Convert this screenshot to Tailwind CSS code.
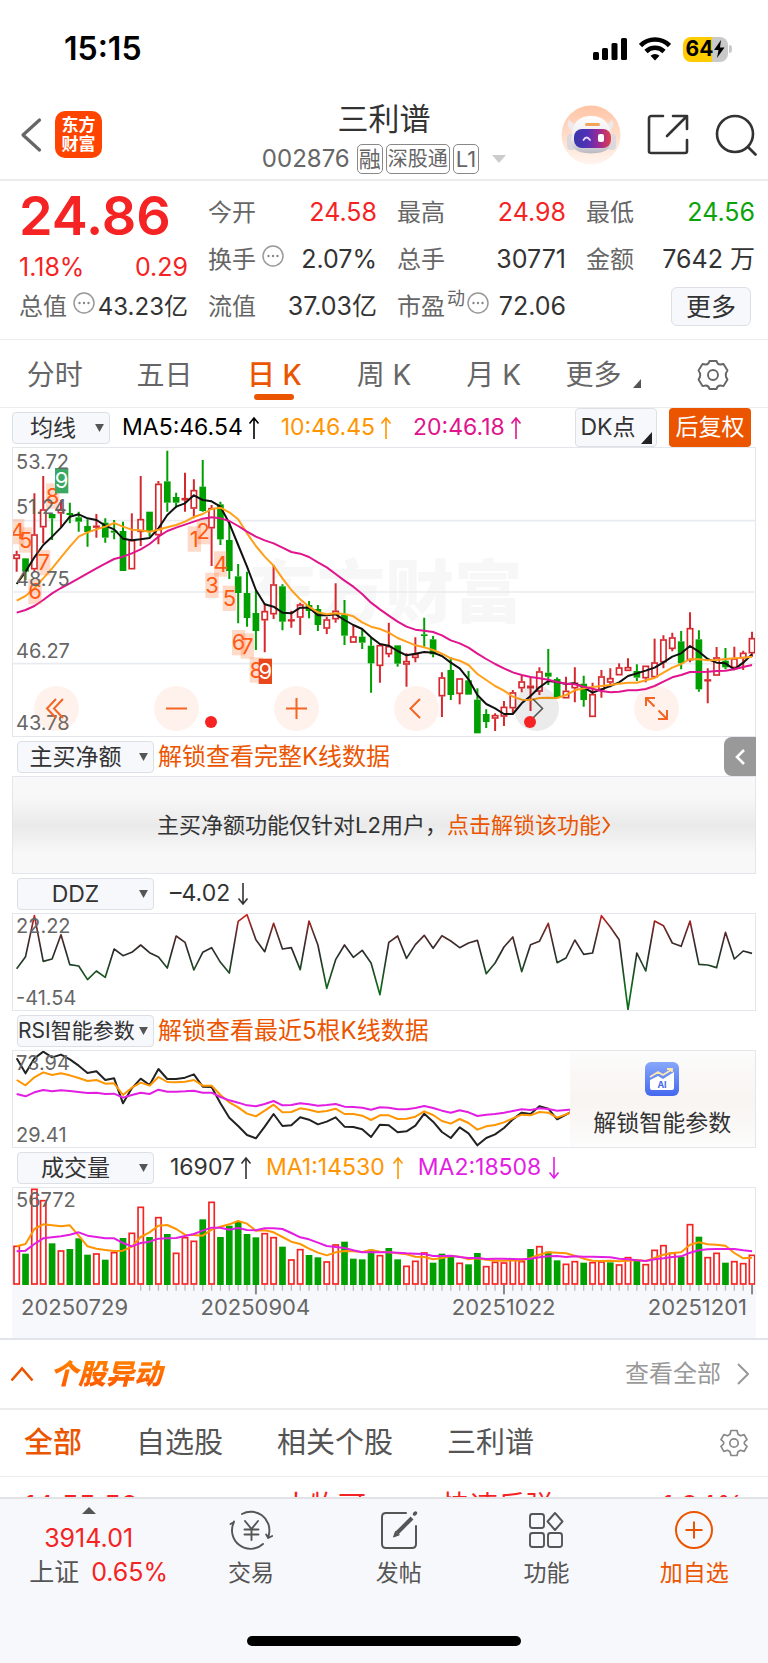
<!DOCTYPE html>
<html lang="zh-CN">

<head>
    <meta charset="UTF-8">
    <meta name="viewport" content="width=device-width, initial-scale=1.0">
    <title>三利谱 002876</title>
    <script src="https://cdn.jsdelivr.net/npm/@tailwindcss/browser@4"></script>
</head>

<body class="h-screen flex flex-col overflow-hidden bg-white text-[#333] font-['Inter','Noto_Sans_CJK_SC',sans-serif]">

    <!-- Shared icons -->
    <svg class="hidden">
        <symbol id="up" viewBox="0 0 12 24"><path d="M6 23V2M1.5 7.500 6 2l4.500 5.500" fill="none" stroke="currentColor" stroke-width="1.600" /></symbol>
        <symbol id="down" viewBox="0 0 12 24"><path d="M6 1v21M1.500 16.500 6 22l4.500-5.500" fill="none" stroke="currentColor" stroke-width="1.600" /></symbol>
        <symbol id="caret" viewBox="0 0 10 9"><path d="M0 0h10L5 9z" fill="#555" /></symbol>
        <symbol id="dots" viewBox="0 0 22 22">
            <circle cx="11" cy="11" r="10" fill="none" stroke="#999" stroke-width="1.500" />
            <circle cx="6.500" cy="11" r="1.200" fill="#888" /><circle cx="11" cy="11" r="1.200" fill="#888" /><circle cx="15.500" cy="11" r="1.200" fill="#888" />
        </symbol>
    </svg>

    <main class="flex-1 min-h-0 overflow-hidden">
        <!-- Status bar -->
        <div class="h-[98px] flex items-center justify-between pl-16 pr-9 text-black">
            <span class="text-[32px] font-semibold">15:15</span>
            <div class="flex items-center gap-3">
                <svg class="w-[34px] h-6" viewBox="0 0 34 24">
                    <rect x="0" y="15" width="6" height="8" rx="1.500" /><rect x="9" y="11" width="6" height="12" rx="1.500" />
                    <rect x="18.500" y="6" width="6" height="17" rx="1.500" /><rect x="28" y="1" width="6" height="22" rx="1.500" />
                </svg>
                <svg class="w-8 h-6" viewBox="0 0 32 24" fill="none" stroke="#000" stroke-width="4.600">
                    <path d="M1.500 8.500a20.500 20.500 0 0 1 29 0" /><path d="M7 14.500a12.800 12.800 0 0 1 18 0" />
                    <path d="M16 23.500l-4.500-4.800a6.500 6.500 0 0 1 9 0z" fill="#000" stroke="none" />
                </svg>
                <div class="flex items-center gap-px">
                    <div class="flex items-center justify-center w-[45px] h-[25px] rounded-lg bg-linear-to-r from-[#ffcc00] from-65% to-[#c9c9c9] to-65% text-[21px] font-bold">
                        64<svg class="w-3 h-[18px]" viewBox="0 0 12 18"><path d="M8 0 1 10h4.500L4 18l7.500-10.500H7z" /></svg>
                    </div>
                    <div class="w-[3px] h-2 rounded-r-full bg-[#c9c9c9]"></div>
                </div>
            </div>
        </div>

        <!-- Header -->
        <header class="h-[83px] grid grid-cols-[1fr_auto_1fr] items-center border-b-2 border-[#ececee]">
            <div class="flex items-center gap-3 pl-5 pb-2">
                <button aria-label="返回">
                    <svg class="w-[23px] h-9" viewBox="0 0 23 36"><path d="M19.500 3 3 18l16.500 15" fill="none" stroke="#666" stroke-width="3.200" stroke-linecap="round" stroke-linejoin="round" /></svg>
                </button>
                <div class="w-[47px] h-[47px] flex items-center justify-center rounded-[10px] bg-[#ff4400] text-white text-[17px] leading-[19px] font-bold text-center">东方<br>财富</div>
            </div>
            <div class="flex flex-col items-center">
                <h1 class="text-[31px] leading-10">三利谱</h1>
                <div class="flex items-center gap-[3px] h-10 text-[24px] text-[#666]">
                    <span class="pr-1">002876</span>
                    <span class="h-[30px] px-px flex items-center border border-[#888] rounded-[5px] text-[22px] leading-7">融</span>
                    <span class="h-[30px] px-px flex items-center border border-[#888] rounded-[5px] text-[20px] leading-7">深股通</span>
                    <span class="h-[30px] px-0.5 flex items-center border border-[#888] rounded-[5px] text-[22px] leading-7">L1</span>
                    <svg class="w-3.5 h-2 ml-2.5" viewBox="0 0 14 8"><path d="M0 0h14L7 8z" fill="#ccc" /></svg>
                </div>
            </div>
            <div class="flex items-center justify-end gap-[26px] pr-[11px] pb-2">
                <svg class="w-[60px] h-[60px]" viewBox="0 0 60 60">
                    <defs>
                        <linearGradient id="halo" x2="0" y2="1"><stop offset="0" stop-color="#ffc4a4" /><stop offset="1" stop-color="#fff5ef" /></linearGradient>
                        <linearGradient id="head" x2="0" y2="1"><stop offset="0" stop-color="#fff" /><stop offset=".6" stop-color="#ece9ec" /><stop offset="1" stop-color="#b9b8c2" /></linearGradient>
                        <linearGradient id="visor"><stop offset="0" stop-color="#3a35a8" /><stop offset=".35" stop-color="#5030b8" /><stop offset=".7" stop-color="#a02a90" /><stop offset="1" stop-color="#e0404a" /></linearGradient>
                    </defs>
                    <circle cx="30" cy="30" r="29.500" fill="url(#halo)" />
                    <path d="M8 14q-4 8 4 13l7-8q-9 1-11-5zM51 14q4 8-4 13l-7-8q9 1 11-5z" fill="#eeeaec" />
                    <rect x="6" y="29" width="9" height="16" rx="4" fill="#dcd8de" /><rect x="46" y="29" width="9" height="16" rx="4" fill="#dcd8de" />
                    <path d="M11 30q1-19 19-19t20 19q5 18-20 18.500Q6 48 11 30z" fill="url(#head)" />
                    <rect x="13" y="24" width="37" height="19" rx="8" fill="url(#visor)" />
                    <path d="M22.500 35q3-5 6.500 0" fill="none" stroke="#e8dcff" stroke-width="1.800" stroke-linecap="round" />
                    <rect x="37" y="29" width="6" height="8" rx="2" fill="#fff" />
                    <rect x="24" y="18" width="15" height="3" rx="1.500" fill="#f0a45c" />
                </svg>
                <button aria-label="分享">
                    <svg class="w-[42px] h-[42px]" viewBox="0 0 42 42" fill="none" stroke="#333" stroke-width="2.600" stroke-linecap="round" stroke-linejoin="round">
                        <path d="M16 2H4.500Q2 2 2 4.500v33Q2 39 4.500 39H38q2 0 2-2V26M26 2h14v13M39 3 20 22" />
                    </svg>
                </button>
                <button aria-label="搜索">
                    <svg class="w-[42px] h-[42px]" viewBox="0 0 42 42" fill="none" stroke="#333" stroke-width="2.600" stroke-linecap="round">
                        <circle cx="20" cy="20" r="18" /><path d="m33 33 7.500 7.500" />
                    </svg>
                </button>
            </div>
        </header>

        <!-- Quote -->
        <section class="grid grid-cols-4 gap-5 pl-[19px] pr-[13px] pt-2 pb-[9px] border-b border-[#ededf0] text-[25px]">
            <div>
                <div class="h-[52px] flex items-center text-[54px] font-semibold text-[#f52323]">24.86</div>
                <div class="h-[42px] flex items-end justify-between leading-8 text-[#f52323]"><span>1.18%</span><span>0.29</span></div>
                <div class="h-[47px] flex items-center justify-between whitespace-nowrap text-[24px]">
                    <span class="text-[#666]">总值</span><svg class="w-[22px] h-[22px] mb-2 ml-1 shrink-0"><use href="#dots" /></svg><span>43.23亿</span>
                </div>
            </div>
            <div>
                <div class="h-[47px] flex items-center justify-between"><span class="text-[24px] text-[#666]">今开</span><span class="text-[#f52323]">24.58</span></div>
                <div class="h-[47px] flex items-center">
                    <span class="text-[24px] text-[#666]">换手</span><svg class="w-[22px] h-[22px] mb-2 ml-1.5"><use href="#dots" /></svg><span class="ml-auto">2.07%</span>
                </div>
                <div class="h-[47px] flex items-center justify-between"><span class="text-[24px] text-[#666]">流值</span><span>37.03亿</span></div>
            </div>
            <div>
                <div class="h-[47px] flex items-center justify-between"><span class="text-[24px] text-[#666]">最高</span><span class="text-[#f52323]">24.98</span></div>
                <div class="h-[47px] flex items-center justify-between"><span class="text-[24px] text-[#666]">总手</span><span>30771</span></div>
                <div class="h-[47px] flex items-center">
                    <span class="text-[24px] text-[#666]">市盈</span><span class="text-[18px] text-[#666] mb-4 ml-0.5">动</span><svg class="w-[22px] h-[22px] mb-2 ml-0.5"><use href="#dots" /></svg><span class="ml-auto">72.06</span>
                </div>
            </div>
            <div>
                <div class="h-[47px] flex items-center justify-between"><span class="text-[24px] text-[#666]">最低</span><span class="text-[#0aa30a]">24.56</span></div>
                <div class="h-[47px] flex items-center justify-between"><span class="text-[24px] text-[#666]">金额</span><span>7642 万</span></div>
                <div class="h-[47px] flex items-center justify-end pr-1"><button class="w-20 h-[39px] border border-[#dcdfe6] rounded-md bg-[#f7f8fb] text-[25px] leading-9">更多</button></div>
            </div>
        </section>

        <!-- Period tabs -->
        <nav class="h-[68px] pt-0.5 grid grid-cols-7 items-center justify-items-center border-b border-[#ededf0] text-[28px] text-[#666]">
            <button>分时</button>
            <button>五日</button>
            <button class="relative text-[#eb5500] font-medium">日 K<span class="absolute left-1/2 -translate-x-1/2 -bottom-1 w-10 h-1.5 rounded-full bg-[#eb5500]"></span></button>
            <button>周 K</button>
            <button>月 K</button>
            <button class="flex items-end gap-3">更多<svg class="w-2 h-[9px] mb-2" viewBox="0 0 8 9"><path d="M8 0v9H0z" fill="#555" /></svg></button>
            <button aria-label="设置">
                <svg class="w-8 h-8" viewBox="0 0 32 32" fill="none" stroke="#666" stroke-width="1.900" stroke-linejoin="round">
                    <path d="M12.500 2h7q1 4.200 5.200 3.300l1.800-.3 4 6.500q-3.500 4.500 0 9l-4 6.500-1.800-.3q-4.200-.9-5.200 3.300h-7q-1-4.200-5.200-3.300l-1.800.3-4-6.500q3.500-4.500 0-9l4-6.500 1.800.3Q11.500 6.200 12.500 2z" />
                    <circle cx="16" cy="16" r="5" />
                </svg>
            </button>
        </nav>

        <section class="mx-3">
            <!-- MA toolbar -->
            <div class="h-[39px] flex items-center text-[23px]">
                <div class="relative">
                    <select aria-label="指标" class="appearance-none block w-[98px] h-8 pr-4 border border-[#dcdfe6] rounded bg-[#f7f8fb] text-[23px] leading-7 [text-align-last:center]"><option>均线</option></select>
                    <svg class="absolute right-1.5 top-3 w-[9px] h-2 pointer-events-none"><use href="#caret" /></svg>
                </div>
                <div class="flex items-center gap-[5px] ml-3 text-black">MA5:46.54<svg class="w-3 h-6"><use href="#up" /></svg></div>
                <div class="flex items-center gap-[5px] ml-[21px] text-[#ff9500]">10:46.45<svg class="w-3 h-6"><use href="#up" /></svg></div>
                <div class="flex items-center gap-[5px] ml-[21px] text-[#e0148c]">20:46.18<svg class="w-3 h-6"><use href="#up" /></svg></div>
                <button class="relative ml-auto w-[82px] h-[39px] pr-4 border border-[#dcdfe6] rounded bg-[#f7f8fb] whitespace-nowrap">DK点<svg class="absolute right-1 bottom-0.5 w-[11px] h-3" viewBox="0 0 11 12"><path d="M11 0v12H0z" fill="#222" /></svg></button>
                <button class="ml-3 mr-[5px] w-[82px] h-[39px] rounded bg-[#eb5500] text-white">后复权</button>
            </div>

            <!-- Candles -->
            <div class="relative border border-[#e3e6ea]">
                <svg id="kline" class="block w-full" viewBox="0 24 2226 864"></svg>
                <div class="absolute inset-0 grid grid-rows-[26px_45px_72px_72px_72px] items-end pl-[3px] text-[20px] leading-6 text-[#666] pointer-events-none">
                    <span>53.72</span><span>51.24</span><span>48.75</span><span>46.27</span><span>43.78</span>
                </div>
                <div class="absolute left-[21px] bottom-[5px] flex gap-[75px] text-[#f26522]">
                    <button aria-label="最左" class="w-[45px] h-[45px] rounded-full bg-[#ff7a3c]/10"><svg viewBox="0 0 45 45" fill="none" stroke="currentColor" stroke-width="2"><path d="M22 13 13 22.500 22 32M29 13l-9 9.500 9 9.500" /></svg></button>
                    <button aria-label="缩小" class="w-[45px] h-[45px] rounded-full bg-[#ff7a3c]/10"><svg viewBox="0 0 45 45" fill="none" stroke="currentColor" stroke-width="2"><path d="M12 22.500h21" /></svg></button>
                    <button aria-label="放大" class="w-[45px] h-[45px] rounded-full bg-[#ff7a3c]/10"><svg viewBox="0 0 45 45" fill="none" stroke="currentColor" stroke-width="2"><path d="M12 22.500h21M22.500 12v21" /></svg></button>
                    <button aria-label="左移" class="w-[45px] h-[45px] rounded-full bg-[#ff7a3c]/10"><svg viewBox="0 0 45 45" fill="none" stroke="currentColor" stroke-width="2"><path d="M26 13 16.500 22.500 26 32" /></svg></button>
                    <button aria-label="右移" class="w-[45px] h-[45px] rounded-full bg-black/8 text-[#555]"><svg viewBox="0 0 45 45" fill="none" stroke="currentColor" stroke-width="1.600"><path d="m19 13 9.500 9.500L19 32" /></svg></button>
                    <button aria-label="全屏" class="w-[45px] h-[45px] rounded-full bg-[#ff7a3c]/10"><svg viewBox="0 0 45 45" fill="none" stroke="currentColor" stroke-width="2"><path d="M12 20v-8h9M12 12l8.500 8.500M33 24v9h-9M33 33l-8.500-8.500" /></svg></button>
                </div>
                <span class="absolute left-48 bottom-2 w-3 h-3 rounded-full bg-[#f52323]"></span>
                <span class="absolute left-[511px] bottom-2 w-3 h-3 rounded-full bg-[#f52323]"></span>
            </div>

            <!-- Net active buying -->
            <div class="h-[39px] flex items-center text-[24px]">
                <div class="relative ml-[5px]">
                    <select aria-label="指标" class="appearance-none block w-[137px] h-8 pr-5 border border-[#dcdfe6] rounded bg-[#f7f8fb] text-[23px] leading-7 [text-align-last:center]"><option>主买净额</option></select>
                    <svg class="absolute right-1.5 top-3 w-[9px] h-2 pointer-events-none"><use href="#caret" /></svg>
                </div>
                <a href="#" class="ml-1 text-[#eb5500]">解锁查看完整K线数据</a>
                <button aria-label="展开" class="ml-auto w-8 h-[39px] flex items-center justify-center rounded-l-lg bg-[#999]"><svg class="w-3 h-[18px]" viewBox="0 0 12 18"><path d="M10 2 3 9l7 7" fill="none" stroke="#fff" stroke-width="2.600" /></svg></button>
            </div>
            <div class="h-[98px] flex items-center justify-center border border-[#e3e6ea] bg-linear-to-b from-[#f8f8f8] from-20% via-[#eaeaea] via-50% to-[#f8f8f8] to-80% text-[22px]">
                主买净额功能仅针对L2用户，<a href="#" class="flex items-center text-[#eb5500]">点击解锁该功能<svg class="w-2.5 h-5" viewBox="0 0 10 20"><path d="m2 2 6 8-6 8" fill="none" stroke="currentColor" stroke-width="2" /></svg></a>
            </div>

            <!-- DDZ -->
            <div class="h-[39px] flex items-center text-[23px]">
                <div class="relative ml-[5px]">
                    <select aria-label="指标" class="appearance-none block w-[137px] h-8 pr-5 border border-[#dcdfe6] rounded bg-[#f7f8fb] text-[23px] leading-7 [text-align-last:center]"><option>DDZ</option></select>
                    <svg class="absolute right-1.5 top-3 w-[9px] h-2 pointer-events-none"><use href="#caret" /></svg>
                </div>
                <div class="flex items-center gap-[7px] ml-4">–4.02<svg class="w-3 h-6"><use href="#down" /></svg></div>
            </div>
            <div class="relative border border-[#e3e6ea]">
                <svg id="ddz" class="block w-full" viewBox="0 535 2226 288"></svg>
                <div class="absolute inset-0 flex flex-col justify-between pl-[3px] text-[20px] leading-6 text-[#666]"><span>22.22</span><span>-41.54</span></div>
            </div>

            <!-- RSI -->
            <div class="h-[39px] flex items-center text-[24px]">
                <div class="relative ml-[5px]">
                    <select aria-label="指标" class="appearance-none block w-[137px] h-8 pr-4 border border-[#dcdfe6] rounded bg-[#f7f8fb] text-[21px] leading-7"><option>RSI智能参数</option></select>
                    <svg class="absolute right-1.5 top-3 w-[9px] h-2 pointer-events-none"><use href="#caret" /></svg>
                </div>
                <a href="#" class="ml-1 text-[#eb5500]">解锁查看最近5根K线数据</a>
            </div>
            <div class="relative border border-[#e3e6ea]">
                <svg id="rsi" class="block w-full" viewBox="0 118 2226 288"></svg>
                <div class="absolute inset-0 flex flex-col justify-between pl-[3px] text-[20px] leading-6 text-[#666]"><span>73.94</span><span>29.41</span></div>
                <button class="absolute right-0 inset-y-0 w-1/4 pt-1 flex flex-col items-center justify-center gap-2.5 bg-linear-to-b from-[#fcfcfc] via-[#f8f4f1] to-[#fcfcfc] text-[23px]">
                    <svg class="w-[34px] h-[34px]" viewBox="0 0 34 34">
                        <defs><linearGradient id="ai" x2="0" y2="1"><stop offset="0" stop-color="#88a8fb" /><stop offset="1" stop-color="#4468ee" /></linearGradient></defs>
                        <rect width="34" height="34" rx="6" fill="url(#ai)" />
                        <path d="M5 18 13 14l5 3 11-7v16q0 2-2 2H7q-2 0-2-2z" fill="#fff" />
                        <path d="m5 15 8-5 5 3 8-5M22 7h5v3" fill="none" stroke="#ffe9a8" stroke-width="1.800" />
                        <text x="17" y="26" font-size="9" font-weight="700" fill="#4468ee" text-anchor="middle">AI</text>
                    </svg>
                    解锁智能参数
                </button>
            </div>

            <!-- Volume -->
            <div class="h-[39px] flex items-center text-[23px]">
                <div class="relative ml-[5px]">
                    <select aria-label="指标" class="appearance-none block w-[137px] h-8 pr-5 border border-[#dcdfe6] rounded bg-[#f7f8fb] text-[23px] leading-7 [text-align-last:center]"><option>成交量</option></select>
                    <svg class="absolute right-1.5 top-3 w-[9px] h-2 pointer-events-none"><use href="#caret" /></svg>
                </div>
                <div class="flex items-center gap-[5px] ml-4">16907<svg class="w-3 h-6"><use href="#up" /></svg></div>
                <div class="flex items-center gap-[7px] ml-3.5 text-[#ff9500]">MA1:14530<svg class="w-3 h-6"><use href="#up" /></svg></div>
                <div class="flex items-center gap-[7px] ml-3.5 text-[#e31ee3]">MA2:18508<svg class="w-3 h-6"><use href="#down" /></svg></div>
            </div>
            <div class="relative border border-b-0 border-[#e3e6ea]">
                <svg id="volume" class="block w-full" viewBox="0 20 2226 291"></svg>
                <span class="absolute left-[3px] top-0 text-[20px] leading-6 text-[#666]">56772</span>
            </div>
            <div class="h-[53px] px-px bg-[#f7f8fb]">
                <svg id="axis" class="block w-full" viewBox="0 0 2226 30"></svg>
                <div class="grid grid-cols-[130fr_226fr_272fr_116fr] justify-items-center text-[22px] leading-6 text-[#666]">
                    <span class="justify-self-start pl-2">20250729</span><span>20250904</span><span>20251022</span><span class="justify-self-end pr-2">20251201</span>
                </div>
            </div>
        </section>

        <!-- Stock moves -->
        <section class="border-t-2 border-[#e1e4ea]">
            <div class="h-[70px] flex items-center pl-2.5 pr-[19px] border-b-2 border-[#ededf0]">
                <svg class="w-6 h-4" viewBox="0 0 24 16"><path d="m1.500 14.500 10.500-12 10.500 12" fill="none" stroke="#eb5500" stroke-width="2.600" /></svg>
                <h2 class="ml-4 pr-1 text-[28px] font-black italic bg-linear-to-b from-[#ff8a00] to-[#ff4a00] bg-clip-text text-transparent">个股异动</h2>
                <a href="#" class="ml-auto flex items-center gap-4 text-[24px] text-[#999]">查看全部<svg class="w-3 h-[22px]" viewBox="0 0 12 22"><path d="m1 1 10 10L1 21" fill="none" stroke="currentColor" stroke-width="2" /></svg></a>
            </div>
            <nav class="h-[67px] flex items-center gap-[54px] px-6 pr-5 border-b border-[#ededf0] text-[29px] text-[#555]">
                <button class="text-[#eb5500] font-medium">全部</button>
                <button>自选股</button>
                <button>相关个股</button>
                <button>三利谱</button>
                <button aria-label="设置" class="ml-auto">
                    <svg class="w-7 h-7" viewBox="0 0 28 28" fill="none" stroke="#888" stroke-width="1.700" stroke-linejoin="round">
                        <path d="M11 1.500h6l1 3.800 2.500 1.400 3.700-1.100 2.800 5-2.600 2.400v2l2.600 2.400-2.800 5-3.700-1.100-2.500 1.400-1 3.800h-6l-1-3.800-2.500-1.400-3.700 1.100-2.800-5L3.600 15v-2L1 10.600l2.800-5 3.700 1.100L10 5.300z" />
                        <circle cx="14" cy="14" r="4.200" />
                    </svg>
                </button>
            </nav>
            <div class="grid grid-cols-[258fr_160fr_302fr] px-6 pt-[9px] text-[28px] leading-10 text-[#f52323]">
                <span>14:55:58</span><span>大牧可</span><span class="flex justify-between"><span>快速反弹</span><span>1.94%</span></span>
            </div>
        </section>
    </main>

    <!-- Bottom bar -->
    <footer class="shrink-0 h-[166px] flex flex-col justify-between border-t-2 border-[#e1e3e6] bg-[#f7f8fb] text-[#555]">
        <div class="grid grid-cols-[6fr_5fr_5fr_5fr_5fr] text-[23px] leading-8">
            <a href="#" class="flex flex-col items-center pt-2 pl-3 text-[25px]">
                <svg class="w-3.5 h-[7px] mr-3" viewBox="0 0 14 7"><path d="M0 7h14L7 0z" fill="#555" /></svg>
                <span class="pt-2 mr-3 text-[#f52323]">3914.01</span>
                <span class="flex gap-3 pt-0.5 pl-2">上证<span class="text-[#f52323]">0.65%</span></span>
            </a>
            <button class="flex flex-col items-center gap-[7px] pt-[11px]">
                <svg class="w-11 h-10" viewBox="0 0 44 40" fill="none" stroke="#555" stroke-width="1.900" stroke-linecap="round" stroke-linejoin="round">
                    <path d="M13 4A18.500 18.500 0 0 1 40 24l-.8 4M39.200 28l-2-3.500M39.200 28l4-2M34 34A18.500 18.500 0 0 1 5 12M5 12l-3.500 2M5 12v-.5" />
                    <path d="m16 11 6.500 8 6.500-8M22.500 19v11M15.500 19.500h14M15.500 24.500h14" />
                </svg>
                交易
            </button>
            <button class="flex flex-col items-center gap-[7px] pt-[11px]">
                <svg class="w-10 h-10" viewBox="0 0 40 40" fill="none" stroke="#555" stroke-width="2" stroke-linecap="round">
                    <path d="M27 3H7Q3 3 3 7v27q0 4 4 4h26q4 0 4-4V16" />
                    <path d="m35.500 4 1-1" stroke-width="3.500" /><path d="M33 8 18 23" stroke-width="4" stroke-linecap="butt" /><path d="m16.500 21.500-2 5.500 5.500-2z" fill="#555" stroke-width="1" />
                </svg>
                发帖
            </button>
            <button class="flex flex-col items-center gap-[7px] pt-[11px]">
                <svg class="w-10 h-10" viewBox="0 0 40 40" fill="none" stroke="#555" stroke-width="1.900" stroke-linejoin="round">
                    <rect x="4" y="4" width="14" height="14" rx="2.500" /><rect x="4" y="23" width="14" height="14" rx="2.500" /><rect x="22" y="23" width="14" height="14" rx="2.500" />
                    <path d="m29 3 7.500 8.500L29 20l-7.500-8.500z" />
                </svg>
                功能
            </button>
            <button class="flex flex-col items-center gap-[7px] pt-[11px] text-[#eb5500]">
                <svg class="w-10 h-10" viewBox="0 0 40 40" fill="none" stroke="currentColor" stroke-width="2"><circle cx="20" cy="20" r="18" /><path d="M11.500 20h17M20 11.500v17" /></svg>
                加自选
            </button>
        </div>
        <div class="w-[274px] h-2.5 mb-[17px] mx-auto rounded-full bg-black"></div>
    </footer>

    <script>
        const STEP = 26.58, X0 = 11, RED = '#d6292f', GREEN = '#00a000';
        const px = i => (X0 + i * STEP).toFixed(1);

        // one entry per day: high, body top, body bottom, low (rising days start with r)
        const candles = `r332,343,357,395 g355,355,395,420 r160,283,388,395 r108,208,262,310 g222,222,235,300 r180,207,220,262 g188,219,225,250
            g215,232,245,275 g238,258,276,320 r222,257,263,293 g235,248,293,308 g240,272,278,298 g245,273,393,393 r220,300,388,388 r108,237,276,318
            g215,215,275,290 r123,131,286,313 g32,124,188,215 g158,171,188,203 r98,174,181,215 r118,150,206,235 g60,140,213,215 r195,204,265,378
            g185,193,298,315 g250,300,393,417 g372,409,459,550 g395,459,534,560 g450,519,573,630 r490,513,541,637 r375,433,523,537 g433,439,545,571
            r512,538,543,563 r488,493,533,585 g483,495,513,535 g495,507,555,573 r530,538,566,582 r430,512,538,548 g480,523,587,615 r555,589,608,608
            g567,590,608,627 g590,617,670,758 r610,615,678,728 r548,618,643,652 g616,616,671,680 r640,663,674,740 r592,642,654,667 g533,583,588,620
            g588,598,643,652 r697,712,769,831 g652,690,765,780 r715,715,762,793 g693,721,764,764 g745,779,880,880 g808,822,846,864 r820,825,836,873
            r783,800,830,858 r750,757,805,822 r707,724,745,757 r710,737,745,813 r682,694,755,765 g627,698,710,735 g712,717,773,773 r710,752,775,775
            r682,728,745,787 g707,731,780,800 r728,762,831,831 r690,709,750,773 r685,714,728,742 r670,682,706,706 r655,681,693,693 g673,693,713,723
            r677,677,715,727 r596,667,712,712 r586,598,667,685 r578,592,627,634 g573,604,670,688 r517,564,661,667 g571,598,748,755 r685,718,723,790
            r621,652,707,707 g624,662,682,688 r620,655,684,690 r632,638,655,690 r575,594,640,650`.split(/\s+/);

        const ma5 = [432, 395, 352, 315, 290, 263, 230, 223, 235, 240, 257, 268, 296, 301, 298, 294, 265, 225, 200, 190, 166, 180, 184, 200, 250, 315, 380, 450, 493, 500, 518, 520, 503, 503, 526, 526, 523, 540, 555, 567, 592, 612, 617, 633, 646, 641, 636, 638, 648, 668, 685, 718, 765, 792, 805, 822, 822, 790, 768, 742, 723, 726, 732, 730, 742, 758, 748, 738, 727, 708, 700, 692, 683, 667, 650, 640, 618, 635, 657, 668, 670, 688, 668, 643];
        const ma10 = [482, 468, 445, 415, 385, 352, 320, 290, 277, 268, 260, 249, 260, 269, 271, 275, 269, 262, 255, 245, 231, 222, 207, 203, 217, 238, 280, 318, 350, 377, 415, 450, 478, 500, 517, 523, 520, 522, 529, 547, 560, 567, 578, 594, 605, 616, 622, 630, 641, 655, 662, 675, 702, 720, 738, 752, 770, 779, 780, 774, 773, 774, 765, 751, 745, 741, 738, 735, 731, 728, 728, 721, 714, 698, 683, 672, 657, 658, 661, 660, 657, 655, 653, 650];
        const ma20 = [518, 510, 498, 480, 460, 444, 430, 415, 400, 385, 371, 357, 350, 340, 328, 312, 290, 273, 263, 254, 245, 236, 232, 235, 243, 258, 275, 290, 301, 310, 323, 336, 341, 351, 367, 382, 402, 422, 440, 462, 488, 508, 527, 545, 560, 569, 572, 576, 586, 601, 610, 623, 641, 657, 672, 685, 697, 705, 711, 715, 719, 726, 731, 733, 740, 746, 753, 757, 755, 751, 751, 747, 738, 725, 712, 705, 696, 696, 695, 693, 692, 688, 681, 675];

        const ddz = [699, 663, 540, 677, 670, 597, 687, 691, 732, 706, 725, 640, 660, 650, 628, 651, 664, 697, 601, 620, 703, 650, 636, 680, 712, 557, 537, 612, 648, 563, 640, 636, 702, 556, 628, 758, 672, 628, 665, 644, 682, 777, 620, 601, 668, 627, 599, 638, 600, 616, 636, 622, 614, 714, 682, 634, 604, 708, 627, 617, 563, 681, 667, 613, 656, 652, 540, 574, 612, 822, 652, 706, 556, 570, 622, 632, 556, 686, 688, 696, 590, 670, 646, 653];

        const rsi1 = [140, 185, 140, 120, 137, 129, 143, 162, 184, 179, 205, 200, 275, 230, 201, 220, 172, 202, 202, 198, 188, 225, 226, 275, 318, 343, 370, 380, 345, 307, 343, 341, 317, 324, 338, 330, 317, 345, 346, 353, 376, 339, 341, 362, 359, 342, 306, 330, 361, 379, 347, 365, 401, 379, 368, 349, 323, 303, 307, 284, 291, 323, 309, 295];
        const rsi2 = [205, 221, 197, 182, 190, 185, 191, 199, 208, 205, 216, 215, 250, 228, 213, 222, 196, 211, 212, 210, 205, 222, 222, 250, 272, 287, 306, 314, 297, 279, 302, 301, 290, 294, 301, 298, 291, 307, 307, 312, 325, 311, 311, 322, 321, 315, 299, 310, 328, 336, 322, 334, 354, 344, 340, 332, 320, 309, 311, 301, 303, 318, 308, 298];
        const rsi3 = [247, 254, 242, 235, 239, 236, 238, 241, 244, 243, 247, 246, 258, 250, 243, 247, 234, 240, 240, 239, 237, 243, 243, 256, 266, 273, 281, 284, 277, 268, 281, 280, 275, 278, 282, 280, 277, 285, 286, 288, 294, 287, 288, 293, 293, 289, 283, 289, 297, 303, 296, 302, 313, 309, 307, 303, 298, 293, 295, 290, 292, 297, 295, 293];

        const volumes = `r193 g217 r22 r56 g186 r207 g203 g171 g220 r216 g235 r212 g170 r154 r76 g167 r107 g158 r214 r167 r178 g114 r61 g167 g133 g120 g158 g168
            r155 r167 g196 r234 r203 g221 g228 r240 r189 g181 g232 g234 g205 r221 g200 g234 r253 r238 r213 g244 g217 g226 r244 g249 g215 r254 r241 r243 r233 r239
            g203 r194 g211 g237 r247 r239 g244 r242 r240 g243 r249 r227 g238 r248 r205 r191 r214 g226 r128 g166 r227 r214 g244 r239 r245 r220`.split(/\s+/);
        const vol1 = [195, 188, 143, 129, 132, 135, 132, 163, 195, 202, 206, 209, 208, 196, 167, 153, 133, 131, 143, 160, 161, 163, 145, 136, 129, 119, 127, 148, 147, 153, 167, 181, 188, 202, 214, 222, 213, 209, 210, 212, 206, 211, 213, 216, 219, 226, 227, 234, 230, 224, 226, 234, 231, 235, 238, 238, 237, 238, 230, 220, 213, 214, 216, 223, 232, 238, 239, 238, 240, 238, 236, 239, 230, 220, 215, 213, 190, 183, 189, 190, 193, 215, 231, 229];
        const vol2 = [210, 208, 188, 171, 168, 165, 160, 153, 163, 167, 171, 171, 185, 195, 185, 181, 172, 171, 170, 164, 158, 148, 139, 139, 145, 140, 146, 147, 141, 141, 143, 155, 168, 174, 184, 194, 197, 200, 207, 213, 213, 213, 213, 214, 216, 217, 218, 224, 224, 223, 227, 230, 230, 233, 232, 232, 233, 234, 232, 228, 225, 224, 227, 225, 226, 226, 227, 228, 232, 234, 237, 239, 234, 231, 227, 225, 214, 207, 204, 203, 203, 203, 207, 210];

        const line = (data, color, width = 6) =>
            `<polyline points="${data.map((y, i) => px(i) + ',' + y).join(' ')}" fill="none" stroke="${color}" stroke-width="${width}" stroke-linejoin="round" />`;

        // Candle chart
        let k = `<text x="705" y="532" font-size="206" font-weight="900" fill="#f7f7f7">东方财富</text>`;
        [242, 456, 671].forEach(y => k += `<line x1="0" x2="2226" y1="${y}" y2="${y}" stroke="#e8ecf1" stroke-width="5" />`);
        candles.forEach((c, i) => {
            const up = c[0] === 'r', color = up ? RED : GREEN;
            const [hi, top, bottom, lo] = c.slice(1).split(',').map(Number);
            const x = +px(i);
            k += `<path d="M${x} ${hi}V${top}M${x} ${bottom}V${lo}" stroke="${color}" stroke-width="6" />`;
            k += up
                ? `<rect x="${x - 8}" y="${top + 2}" width="16" height="${Math.max(bottom - top - 4, 2)}" fill="#fff" stroke="${color}" stroke-width="5" />`
                : `<rect x="${x - 10}" y="${top}" width="20" height="${bottom - top}" fill="${color}" />`;
        });
        k += line(ma5, '#111') + line(ma10, '#ff9f1a') + line(ma20, '#e0148c');

        const marks = [['4', 14, 275], ['5', 38, 300], ['6', 66, 455], ['7', 92, 368], ['8', 119, 168], ['9', 146, 122, '#3aa864'], ['1', 544, 297], ['2', 571, 275], ['4', 623, 372],
            ['3', 597, 436], ['5', 649, 475], ['6', 677, 608], ['7', 703, 618], ['8', 730, 690], ['9', 757, 694, '#e8481c']];
        marks.forEach(([n, x, y, bg]) => {
            k += `<rect x="${x - 20}" y="${y - 38}" width="40" height="76" fill="${bg || '#ff7a3c'}" fill-opacity="${bg ? 1 : .28}" />
                  <text x="${x}" y="${y + 23}" font-size="66" text-anchor="middle" fill="${bg ? '#fff' : '#ff5a14'}">${n}</text>`;
        });
        document.getElementById('kline').innerHTML = k;

        // DDZ fades from red at the top to green at the bottom
        document.getElementById('ddz').innerHTML = `
            <defs><linearGradient id="heat" gradientUnits="userSpaceOnUse" x1="0" x2="0" y1="536" y2="760">
                <stop offset="0" stop-color="#d02020" /><stop offset=".25" stop-color="#5a2a2a" /><stop offset=".5" stop-color="#2b2b2b" /><stop offset="1" stop-color="#0f6a1a" />
            </linearGradient></defs>` + line(ddz, 'url(#heat)', 5);

        document.getElementById('rsi').innerHTML = line(rsi1, '#222') + line(rsi2, '#ff9500') + line(rsi3, '#e31ee3');

        // Volume
        document.getElementById('volume').innerHTML = volumes.map((v, i) => {
            const top = +v.slice(1), x = +px(i);
            return v[0] === 'r'
                ? `<rect x="${x - 8}" y="${top + 2}" width="16" height="${306 - top}" fill="#fff" stroke="#f52323" stroke-width="5" />`
                : `<rect x="${x - 10}" y="${top}" width="20" height="${311 - top}" fill="${GREEN}" />`;
        }).join('') + line(vol1, '#ff9500') + line(vol2, '#e31ee3');

        let ticks = '';
        for (let i = 14; i < 84; i++) {
            const major = [27, 55, 83].includes(i);
            ticks += `<path d="M${px(i)} 0V${major ? 28 : 17}" stroke="${major ? '#888' : '#bbb'}" stroke-width="${major ? 6 : 4}" />`;
        }
        document.getElementById('axis').innerHTML = ticks;
    </script>
</body>

</html>
